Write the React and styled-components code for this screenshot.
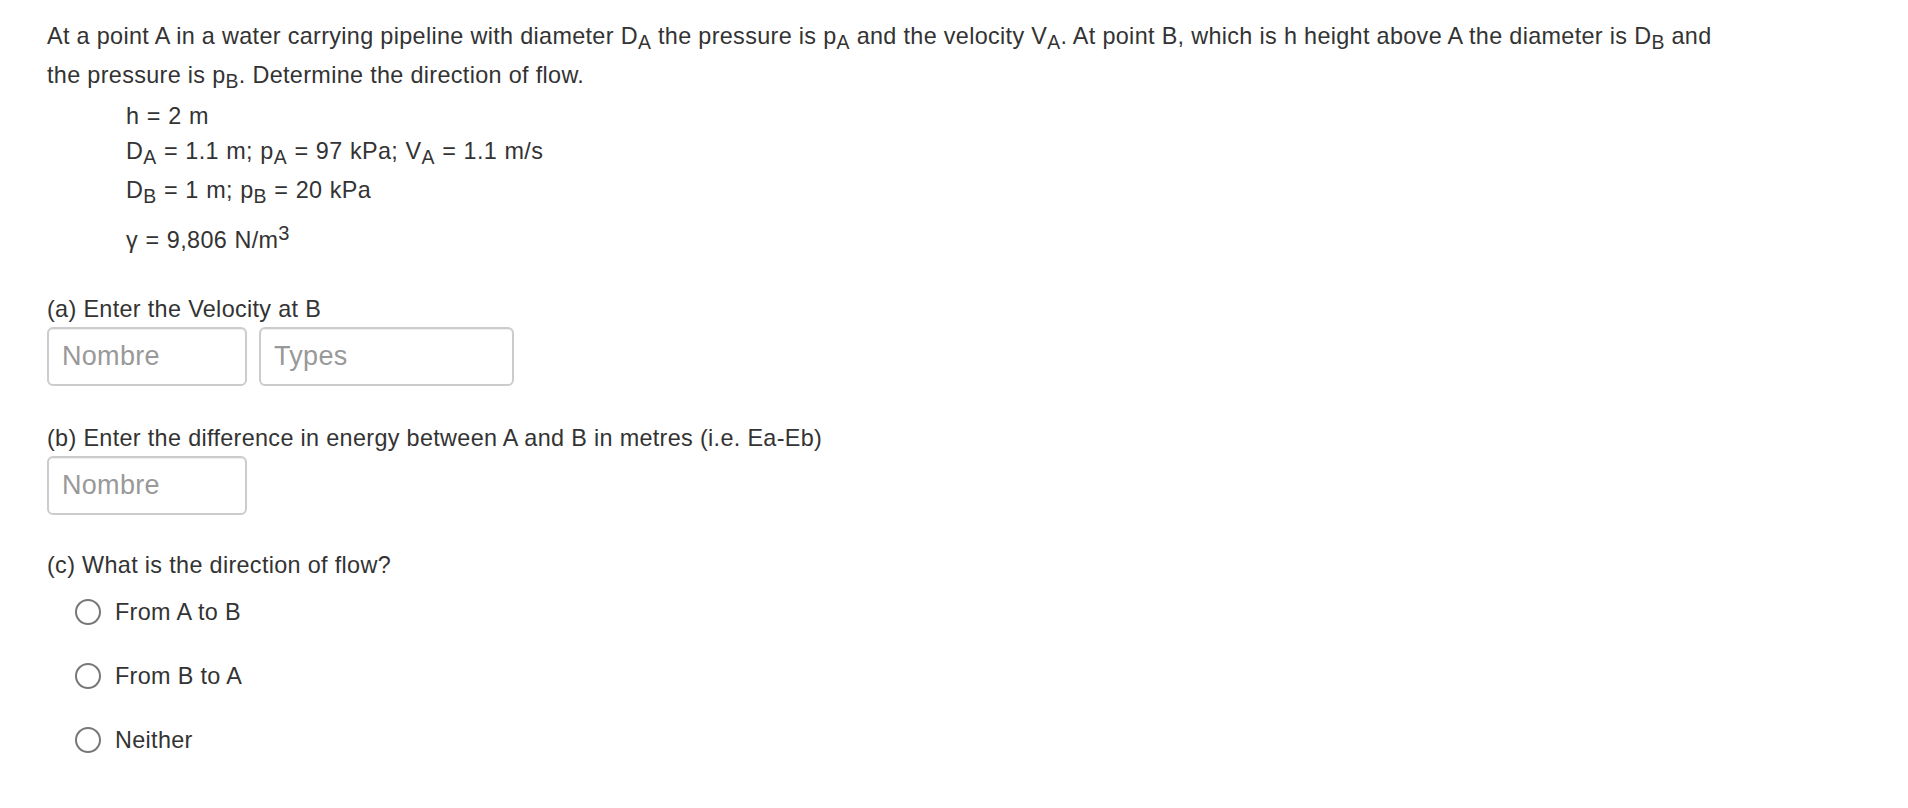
import React from "react";
import styled, { createGlobalStyle } from "styled-components";

const GlobalStyle = createGlobalStyle`
  html, body {
    margin: 0;
    padding: 0;
    background: #ffffff;
  }
  body {
    font-family: "Liberation Sans", Arial, Helvetica, sans-serif;
    font-size: 23.4px;
    letter-spacing: 0.33px;
    color: #333333;
  }
`;

const Page = styled.main`
  padding: 17px 47px 0;
  display: flex;
  flex-direction: column;
`;

const Paragraph = styled.p`
  margin: 0;
  line-height: 39px;
`;

const Sub = styled.sub`
  font-size: 0.83em;
  vertical-align: -5px;
  line-height: 0;
`;

const Sup = styled.sup`
  font-size: 0.86em;
  vertical-align: 8px;
  line-height: 0;
`;

const GivenList = styled.div`
  padding-left: 79px;
  display: flex;
  flex-direction: column;
`;

const GivenLine = styled.div`
  line-height: 30px;
  word-spacing: 0.6px;
  margin-top: ${(p) => p.$mt}px;
`;

const Section = styled.section`
  display: flex;
  flex-direction: column;
  align-items: flex-start;
  gap: 3px;
  margin-top: ${(p) => p.$mt}px;
`;

const Label = styled.div`
  line-height: 30px;
`;

const InputRow = styled.div`
  display: flex;
  gap: 12px;
`;

const Field = styled.input`
  box-sizing: border-box;
  width: ${(p) => p.$w}px;
  height: 59px;
  padding: 0 13px;
  border: 2px solid #cccccc;
  border-radius: 6px;
  box-shadow: inset 0 1px 1px rgba(0, 0, 0, 0.075);
  font-family: "Liberation Sans", Arial, Helvetica, sans-serif;
  font-size: 27px;
  letter-spacing: 0.3px;
  color: #333333;
  background: #ffffff;
  outline: none;
  &::placeholder {
    color: #999999;
  }
`;

const RadioList = styled.div`
  display: flex;
  flex-direction: column;
  gap: 34px;
  padding-left: 28px;
  margin-top: 17px;
`;

const RadioRow = styled.label`
  display: flex;
  align-items: center;
  gap: 14px;
  line-height: 30px;
`;

const RadioDot = styled.input`
  appearance: none;
  margin: 0;
  width: 26px;
  height: 26px;
  box-sizing: border-box;
  border: 2.5px solid #777777;
  border-radius: 50%;
  background: #ffffff;
`;

export default function App() {
  return (
    <>
      <GlobalStyle />
      <Page>
        <Paragraph>
          At a point A in a water carrying pipeline with diameter D<Sub>A</Sub> the pressure is p
          <Sub>A</Sub> and the velocity V<Sub>A</Sub>. At point B, which is h height above A the
          diameter is D<Sub>B</Sub> and
          <br />
          the pressure is p<Sub>B</Sub>. Determine the direction of flow.
        </Paragraph>
        <GivenList>
          <GivenLine $mt={6}>h = 2 m</GivenLine>
          <GivenLine $mt={5}>
            D<Sub>A</Sub> = 1.1 m; p<Sub>A</Sub> = 97 kPa; V<Sub>A</Sub> = 1.1 m/s
          </GivenLine>
          <GivenLine $mt={9}>
            D<Sub>B</Sub> = 1 m; p<Sub>B</Sub> = 20 kPa
          </GivenLine>
          <GivenLine $mt={20}>
            γ = 9,806 N/m<Sup>3</Sup>
          </GivenLine>
        </GivenList>

        <Section $mt={39}>
          <Label>(a) Enter the Velocity at B</Label>
          <InputRow>
            <Field type="text" placeholder="Nombre" $w={200} />
            <Field type="text" placeholder="Types" $w={255} />
          </InputRow>
        </Section>

        <Section $mt={37}>
          <Label>(b) Enter the difference in energy between A and B in metres (i.e. Ea-Eb)</Label>
          <InputRow>
            <Field type="text" placeholder="Nombre" $w={200} />
          </InputRow>
        </Section>

        <Section $mt={35}>
          <Label>(c) What is the direction of flow?</Label>
        </Section>
        <RadioList>
          <RadioRow>
            <RadioDot type="radio" name="flow" />
            From A to B
          </RadioRow>
          <RadioRow>
            <RadioDot type="radio" name="flow" />
            From B to A
          </RadioRow>
          <RadioRow>
            <RadioDot type="radio" name="flow" />
            Neither
          </RadioRow>
        </RadioList>
      </Page>
    </>
  );
}
